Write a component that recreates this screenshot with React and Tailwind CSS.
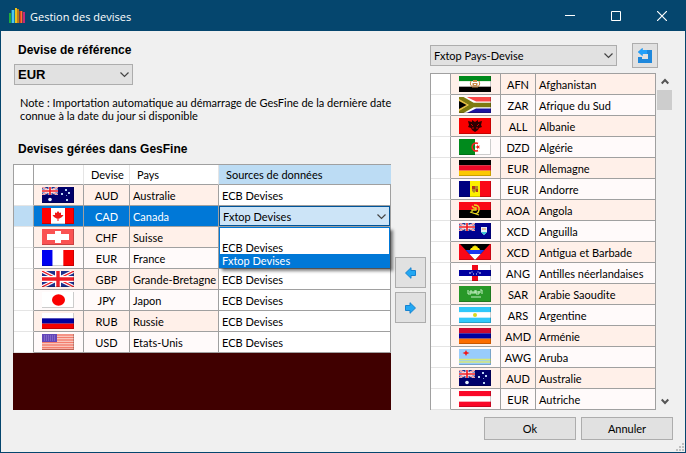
import { useState } from 'react';
import clsx from 'clsx';

const UnionJack = ({ w = 32, h = 16 }) => (
  <svg width={w} height={h} viewBox="0 0 32 16" preserveAspectRatio="none">
    <rect width="32" height="16" fill="#1c2f8c" />
    <path d="M0 0L32 16M32 0L0 16" stroke="#fff" strokeWidth="3.6" />
    <path d="M0 0L32 16M32 0L0 16" stroke="#ee1c25" strokeWidth="1.2" />
    <path d="M16 0V16M0 8H32" stroke="#fff" strokeWidth="6" />
    <path d="M16 0V16M0 8H32" stroke="#ee1c25" strokeWidth="3.4" />
  </svg>
);

const Stripes = ({ colors, vertical }) => {
  const size = (vertical ? 32 : 16) / colors.length;
  return colors.map((fill, i) => (
    <rect
      key={i}
      x={vertical ? i * size : 0}
      y={vertical ? 0 : i * size}
      width={vertical ? size : 32}
      height={vertical ? 16 : size}
      fill={fill}
    />
  ));
};

const flags = {
  australia: (
    <>
      <rect width="32" height="16" fill="#00006b" />
      <UnionJack w={16} h={8} />
      <circle cx="8" cy="12.5" r="1.8" fill="#e8f4ff" />
      <path d="M23 2h2v2h-2zM19 6h2v2h-2zM26 5h2v2h-2zM24 12h2v2h-2z" fill="#b9d4f5" />
      <path d="M24 8h1v1h-1z" fill="#7c9bd0" />
    </>
  ),
  canada: (
    <>
      <rect width="32" height="16" fill="#fff" />
      <path d="M0 0h9v16H0zM23 0h9v16h-9z" fill="#f00" />
      <path d="M16 3l1.500 2L19 4.500V7l2.500 0-1.500 2-2.500 1.500h-1v2.500h-1v-2.500h-1L12 9l-1.500-2 2.500 0V4.500l1.500.5z" fill="#f01818" />
    </>
  ),
  switzerland: (
    <>
      <rect width="32" height="16" fill="#fa5252" />
      <path d="M13 2h6v3h8v6h-8v3h-6v-3H5V5h8z" fill="#fff" />
    </>
  ),
  france: <Stripes vertical colors={['#0000f0', '#ffffff', '#fa0000']} />,
  uk: <UnionJack />,
  japan: (
    <>
      <rect width="32" height="16" fill="#fff" />
      <ellipse cx="16.500" cy="8" rx="6.500" ry="5.700" fill="#fa0000" />
    </>
  ),
  russia: <Stripes colors={['#ffffff', '#0000a0', '#f40000']} />,
  usa: (
    <>
      <rect width="32" height="16" fill="#fbdcd4" />
      <path d="M0 1h32M0 3.500h32M0 6h32M0 8.500h32M0 11h32M0 13.500h32M0 15.500h32" stroke="#f47c6c" strokeWidth="1.300" />
      <rect width="15" height="8" fill="#6446b8" />
      <path d="M2 2h11M2 4h11M2 6h11" stroke="#9c86d6" strokeDasharray="1 1" />
    </>
  ),
  afghanistan: (
    <>
      <Stripes colors={['#008a1c', '#ffffff', '#000000']} />
      <path d="M12 5q-2 3 1 6M20 5q2 3-1 6M13 11h6" stroke="#c8853c" fill="none" />
      <path d="M14 4h4v2h-4zM13.500 7h5v3h-5z" fill="#c98a48" />
      <path d="M15 8h2v1h-2z" fill="#fff" />
    </>
  ),
  southAfrica: (
    <>
      <rect width="32" height="8" fill="#fa4646" />
      <rect y="8" width="32" height="8" fill="#1c14a0" />
      <path d="M0 0L16 8H32M0 16L16 8" stroke="#fff" strokeWidth="7" fill="none" />
      <path d="M0 0L14 8H32M0 16L14 8" stroke="#7e7a10" strokeWidth="4.500" fill="none" />
      <path d="M0 2L10 8 0 14z" fill="#e8c040" />
      <path d="M0 4L7.500 8 0 12z" fill="#000" />
    </>
  ),
  albania: (
    <>
      <rect width="32" height="16" fill="#fa0000" />
      <path d="M13 2l3 2 3-2v2l4-1-1 4 1 2-3 1-1 2-3 2-3-2-1-2-3-1 1-2-1-4 4 1z" fill="#2c0000" />
      <path d="M12 6l2 2M20 6l-2 2M13 10h2M17 10h2" stroke="#d00000" />
    </>
  ),
  algeria: (
    <>
      <rect width="16" height="16" fill="#008a1c" />
      <rect x="16" width="16" height="16" fill="#fff" />
      <path d="M19 4.500a4 4 0 1 0 0 7" stroke="#f02020" strokeWidth="1.600" fill="none" />
      <path d="M16 8l2-.8V5.500L19 7l2-.5-1 1.500 1 1.500-2-.5-1 1.500V8.800z" fill="#f02020" />
    </>
  ),
  germany: <Stripes colors={['#000000', '#ee0a28', '#fcc800']} />,
  andorra: (
    <>
      <rect width="11" height="16" fill="#000080" />
      <rect x="11" width="10" height="16" fill="#fcf000" />
      <rect x="21" width="11" height="16" fill="#fa0818" />
      <path d="M13 5h3v3h-3zM17 8h2v3h-2z" fill="#b03818" />
      <path d="M16 5h3v3h-3zM13 8h4v2l-2 2-2-2z" fill="#b08828" />
    </>
  ),
  angola: (
    <>
      <rect width="32" height="8" fill="#fa0818" />
      <rect y="8" width="32" height="8" fill="#000" />
      <path d="M15 3q6 0 5 5t-6 3M11 10l9 3M13 4l2 2h2v2h-4v2" stroke="#e8d820" strokeWidth="1.300" fill="none" />
    </>
  ),
  anguilla: (
    <>
      <rect width="32" height="16" fill="#000090" />
      <UnionJack w={16} h={8} />
      <path d="M22 4h6v5l-3 3-3-3z" fill="#e4eef4" />
      <path d="M22 9h6l-3 3z" fill="#38c8d8" />
      <path d="M23 6h4" stroke="#e88840" />
    </>
  ),
  antigua: (
    <>
      <rect width="32" height="16" fill="#fa0818" />
      <path d="M1 0h30L16 16z" fill="#000" />
      <path d="M6.600 6h18.800L21.600 10H10.400z" fill="#1838f0" />
      <path d="M10.400 10h11.200L16 16z" fill="#fff" />
      <path d="M11 6l1-2 1 0 1-2 1 .5L16 1l1 1.500 1-.5 1 2 1 0 1 2z" fill="#fce808" />
    </>
  ),
  antilles: (
    <>
      <rect width="32" height="16" fill="#fff" />
      <rect x="13" width="6" height="16" fill="#f00818" />
      <rect y="5" width="32" height="6" fill="#0000a0" />
      <path d="M10 8h2M14 9h1M17 9h1M20 8h2M12.500 7h1M18.500 7h1" stroke="#dde4ff" />
    </>
  ),
  saudi: (
    <>
      <rect width="32" height="16" fill="#289828" />
      <path d="M9 4v4h3V4M13 7h3V4M17 4v4h3V5M21 4h2v4M10 6h12" stroke="#c4f0c4" fill="none" />
      <path d="M12 11h10" stroke="#c4f0c4" />
    </>
  ),
  argentina: (
    <>
      <Stripes colors={['#30c8fa', '#ffffff', '#30c8fa']} />
      <circle cx="16" cy="8" r="2" fill="#d8d820" />
    </>
  ),
  armenia: <Stripes colors={['#cc0830', '#0000a0', '#fa6c00']} />,
  aruba: (
    <>
      <rect width="32" height="16" fill="#98ccfc" />
      <path d="M0 10.500h32M0 13h32" stroke="#d8e878" strokeWidth="1.500" />
      <path d="M7 1l1 2 2.500 1L8 5 7 7 6 5 3.500 4 6 3z" fill="#f01818" />
    </>
  ),
  austria: <Stripes colors={['#fa0828', '#ffffff', '#fa0828']} />,
};

const Flag = ({ name }) => (
  <svg className="block" width="32" height="16" viewBox="0 0 32 16">
    {flags[name]}
    <path d="M0 15.500H31.500V0" stroke="#000" strokeOpacity=".2" fill="none" />
  </svg>
);

const managed = [
  { flag: 'australia', code: 'AUD', country: 'Australie', source: 'ECB Devises' },
  { flag: 'canada', code: 'CAD', country: 'Canada', source: 'Fxtop Devises' },
  { flag: 'switzerland', code: 'CHF', country: 'Suisse', source: 'ECB Devises' },
  { flag: 'france', code: 'EUR', country: 'France', source: 'ECB Devises' },
  { flag: 'uk', code: 'GBP', country: 'Grande-Bretagne', source: 'ECB Devises' },
  { flag: 'japan', code: 'JPY', country: 'Japon', source: 'ECB Devises' },
  { flag: 'russia', code: 'RUB', country: 'Russie', source: 'ECB Devises' },
  { flag: 'usa', code: 'USD', country: 'Etats-Unis', source: 'ECB Devises' },
];

const available = [
  ['afghanistan', 'AFN', 'Afghanistan'],
  ['southAfrica', 'ZAR', 'Afrique du Sud'],
  ['albania', 'ALL', 'Albanie'],
  ['algeria', 'DZD', 'Algérie'],
  ['germany', 'EUR', 'Allemagne'],
  ['andorra', 'EUR', 'Andorre'],
  ['angola', 'AOA', 'Angola'],
  ['anguilla', 'XCD', 'Anguilla'],
  ['antigua', 'XCD', 'Antigua et Barbade'],
  ['antilles', 'ANG', 'Antilles néerlandaises'],
  ['saudi', 'SAR', 'Arabie Saoudite'],
  ['argentina', 'ARS', 'Argentine'],
  ['armenia', 'AMD', 'Arménie'],
  ['aruba', 'AWG', 'Aruba'],
  ['australia', 'AUD', 'Australie'],
  ['austria', 'EUR', 'Autriche'],
];

const sources = ['', 'ECB Devises', 'Fxtop Devises'];

const cell = 'h-[21px] border-r border-b border-[#a0a0a0] p-0';
const rowHead = 'h-[21px] border-r border-b border-r-[#a0a0a0] border-b-[#e5e5e5] p-0';
const button = 'flex items-center justify-center border border-[#adadad] bg-[#e1e1e1]';

const Chevron = ({ className }) => (
  <svg className={clsx('pointer-events-none absolute', className)} width="9" height="6" viewBox="0 0 9 6">
    <path d="M.5 .5L4.500 4.500 8.500 .5" stroke="#444" strokeWidth="1.200" fill="none" />
  </svg>
);

const ComboBox = ({ label, className, ...props }) => (
  <div className={clsx('relative', className)}>
    <select
      aria-label={label}
      className="block h-[21px] w-full appearance-none border border-[#adadad] bg-[#e1e1e1] pl-[3px] leading-[19px] outline-none"
      {...props}
    />
    <Chevron className="top-2 right-1" />
  </div>
);

const Arrow = ({ right }) => (
  <svg className={clsx(right && 'rotate-180')} width="11" height="12" viewBox="0 0 11 12">
    <path d="M.5 6L6 .7V3.500h4.500v5H6v2.800z" fill="#22a7f2" stroke="#1683d0" />
  </svg>
);

const TitleBar = () => (
  <header className="flex h-[30px] shrink-0 items-center bg-[#05466e] text-white">
    <svg className="ml-2" width="16" height="16" viewBox="0 0 16 16">
      <path d="M0 5h2v10H0z" fill="#1fae3c" />
      <path d="M2.500 2h3v13h-3z" fill="#20b4e8" />
      <path d="M3.500 2h1v13h-1z" fill="#7ad8f4" />
      <path d="M6 0h2v15H6z" fill="#e8c41c" />
      <path d="M8 1h2v14H8z" fill="#c47c18" />
      <path d="M10.500 3h3v12h-3z" fill="#e8401c" />
      <path d="M12 3h1v12h-1z" fill="#f87838" />
      <path d="M14 4h2v11h-2z" fill="#c42878" />
    </svg>
    <h1 className="ml-[5px] flex-1 font-['Open_Sans',sans-serif] text-[11px]">Gestion des devises</h1>
    <button aria-label="Réduire" className="flex h-full w-[46px] items-center justify-center">
      <svg width="10" height="10"><path d="M0 4.500h10" stroke="#fff" /></svg>
    </button>
    <button aria-label="Agrandir" className="flex h-full w-[46px] items-center justify-center">
      <svg width="10" height="10"><path d="M.5 .5h9v9h-9z" stroke="#fff" fill="none" /></svg>
    </button>
    <button aria-label="Fermer" className="flex h-full w-[46px] items-center justify-center">
      <svg width="10" height="10"><path d="M0 0l10 10M10 0L0 10" stroke="#fff" strokeWidth="1.200" /></svg>
    </button>
  </header>
);

const SourcePicker = ({ value, onChange }) => (
  <div className="relative h-5">
    <select
      aria-label="Source de données"
      value={value}
      onChange={(e) => onChange(e.target.value)}
      className="block h-full w-full appearance-none border border-[#005499] bg-[#cce4f7] pl-[3px] text-black outline-none"
    >
      {sources.map((s) => <option key={s}>{s}</option>)}
    </select>
    <Chevron className="top-2 right-1" />
    <ul
      role="listbox"
      className="absolute top-full right-0 left-0 z-10 mt-px border border-[#0078d7] bg-white text-black shadow-[3px_3px_3px_rgba(0,0,0,0.5)]"
    >
      {sources.map((s) => (
        <li
          key={s}
          role="option"
          aria-selected={s === value}
          onClick={() => onChange(s)}
          className={clsx('h-[13px] pl-[2px] leading-[13px]', s === value && 'bg-[#0078d7] text-white')}
        >
          {s}
        </li>
      ))}
    </ul>
  </div>
);

const ManagedTable = ({ source, onSourceChange }) => (
  <table className="w-full table-fixed border-separate border-spacing-0 border-t border-l border-[#a0a0a0] bg-white">
    <colgroup>
      <col className="w-[20px]" />
      <col className="w-[50px]" />
      <col className="w-[46px]" />
      <col className="w-[89px]" />
      <col />
    </colgroup>
    <thead>
      <tr className="h-5 text-left">
        <th className="border-r border-b border-r-[#a0a0a0] border-b-[#a0a0a0] p-0" />
        <th className="border-r border-b border-r-[#e5e5e5] border-b-[#a0a0a0] p-0" />
        <th className="border-r border-b border-r-[#e5e5e5] border-b-[#a0a0a0] p-0 pl-[7px] font-normal">Devise</th>
        <th className="border-r border-b border-r-[#e5e5e5] border-b-[#a0a0a0] p-0 pl-[7px] font-normal">Pays</th>
        <th className="border-b border-[#a0a0a0] bg-[#bcdcf4] p-0 pl-[7px] font-normal">Sources de données</th>
      </tr>
    </thead>
    <tbody>
      {managed.map((row) => {
        const selected = row.code === 'CAD';
        return (
          <tr
            key={row.code}
            className={clsx(selected ? 'bg-[#0078d7] text-white' : 'odd:bg-[#fff0e9] even:bg-[#fffafa]')}
          >
            <td className={clsx(rowHead, selected ? 'bg-[#bcdcf4]' : 'bg-white')} />
            <td className={clsx(cell, 'pl-2')}><Flag name={row.flag} /></td>
            <td className={clsx(cell, 'text-center')}>{row.code}</td>
            <td className={clsx(cell, 'pl-[3px] whitespace-nowrap')}>{row.country}</td>
            <td className={clsx(cell, !selected && 'bg-white pl-[3px]')}>
              {selected ? <SourcePicker value={source} onChange={onSourceChange} /> : row.source}
            </td>
          </tr>
        );
      })}
    </tbody>
  </table>
);

const AvailableTable = () => (
  <table className="w-full table-fixed border-separate border-spacing-0 border-t border-l border-[#a0a0a0] bg-white">
    <colgroup>
      <col className="w-[20px]" />
      <col className="w-[50px]" />
      <col className="w-[35px]" />
      <col />
    </colgroup>
    <tbody>
      {available.map(([flag, code, country]) => (
        <tr key={country} className="odd:bg-[#fff0e9] even:bg-[#fffafa]">
          <td className={clsx(rowHead, 'bg-white')} />
          <td className={clsx(cell, 'pl-2')}><Flag name={flag} /></td>
          <td className={clsx(cell, 'text-center')}>{code}</td>
          <td className={clsx(cell, 'pl-[3px] whitespace-nowrap')}>{country}</td>
        </tr>
      ))}
    </tbody>
  </table>
);

const ScrollBar = () => (
  <div className="flex w-[17px] flex-col items-center">
    <button aria-label="Défiler vers le haut" className="flex h-[17px] w-full items-center justify-center">
      <svg width="8" height="7" viewBox="0 0 8 7"><path d="M.7 5.500L4 2l3.300 3.500" stroke="#555" strokeWidth="2" fill="none" /></svg>
    </button>
    <div className="flex-1 self-stretch pl-px">
      <div className="h-5 w-[15px] bg-[#cdcdcd]" />
    </div>
    <button aria-label="Défiler vers le bas" className="flex h-[17px] w-full items-center justify-center">
      <svg width="8" height="7" viewBox="0 0 8 7"><path d="M.7 1.500L4 5l3.300-3.500" stroke="#555" strokeWidth="2" fill="none" /></svg>
    </button>
  </div>
);

function App() {
  const [reference, setReference] = useState('EUR');
  const [catalog, setCatalog] = useState('Fxtop Pays-Devise');
  const [source, setSource] = useState('Fxtop Devises');

  return (
    <div className="flex min-h-screen flex-col border border-[#05466e] bg-[#f0f0f0] font-[Lato,sans-serif] text-[11px] leading-[13px] text-black">
      <TitleBar />

      <main className="flex flex-1 gap-1 px-3 pt-[11px]">
        <section className="flex min-w-0 flex-1 flex-col">
          <h2 className="pl-[5px] font-['Liberation_Sans',sans-serif] text-[12px] leading-4 font-bold">Devise de référence</h2>
          <ComboBox
            label="Devise de référence"
            className="mt-[6px] ml-px w-[119px] font-['Liberation_Sans',sans-serif] text-[13px] font-bold"
            value={reference}
            onChange={(e) => setReference(e.target.value)}
          >
            <option>EUR</option>
          </ComboBox>
          <p className="mt-[11px] pl-[7px] whitespace-nowrap">
            Note : Importation automatique au démarrage de GesFine de la dernière date
            <br />
            connue à la date du jour si disponible
          </p>
          <h2 className="mt-[19px] pl-[5px] font-['Liberation_Sans',sans-serif] text-[12px] leading-4 font-bold">Devises gérées dans GesFine</h2>
          <div className="mt-[7px] flex-1 bg-[#400000]">
            <ManagedTable source={source} onSourceChange={setSource} />
          </div>
        </section>

        <div className="flex flex-col gap-1 pt-[215px]">
          <button aria-label="Ajouter" className={clsx(button, 'size-[31px]')}><Arrow /></button>
          <button aria-label="Retirer" className={clsx(button, 'size-[31px]')}><Arrow right /></button>
        </div>

        <section className="w-[243px] pt-px">
          <div className="flex items-center gap-[15px]">
            <ComboBox
              label="Catalogue"
              className="w-[187px]"
              value={catalog}
              onChange={(e) => setCatalog(e.target.value)}
            >
              <option>Fxtop Pays-Devise</option>
            </ComboBox>
            <button aria-label="Rétablir" className={clsx(button, 'h-[25px] w-[26px]')}>
              <svg width="14" height="15" viewBox="0 0 14 15">
                <path d="M0 4L4.500 0v2H14v13H0V9h4v2h6V6H4.500v2z" fill="#1e88dc" />
                <path d="M0 4L4.500 0v2H9v4H4.500v2z" fill="#22a0fa" />
              </svg>
            </button>
          </div>
          <div className="mt-[5px] flex">
            <div className="flex-1">
              <AvailableTable />
            </div>
            <ScrollBar />
          </div>
        </section>
      </main>

      <footer className="flex justify-end gap-[5px] px-3 pt-[7px]">
        <button className={clsx(button, 'h-[23px] w-[92px]')}>Ok</button>
        <button className={clsx(button, 'h-[23px] w-[92px]')}>Annuler</button>
      </footer>
      <div className="flex h-3 items-end justify-end p-px">
        <svg width="8" height="8" viewBox="0 0 8 8">
          <path d="M6 0h2v2H6zM3 3h2v2H3zM6 3h2v2H6zM0 6h2v2H0zM3 6h2v2H3zM6 6h2v2H6z" fill="#bfbfbf" />
        </svg>
      </div>
    </div>
  );
}

export default App;
